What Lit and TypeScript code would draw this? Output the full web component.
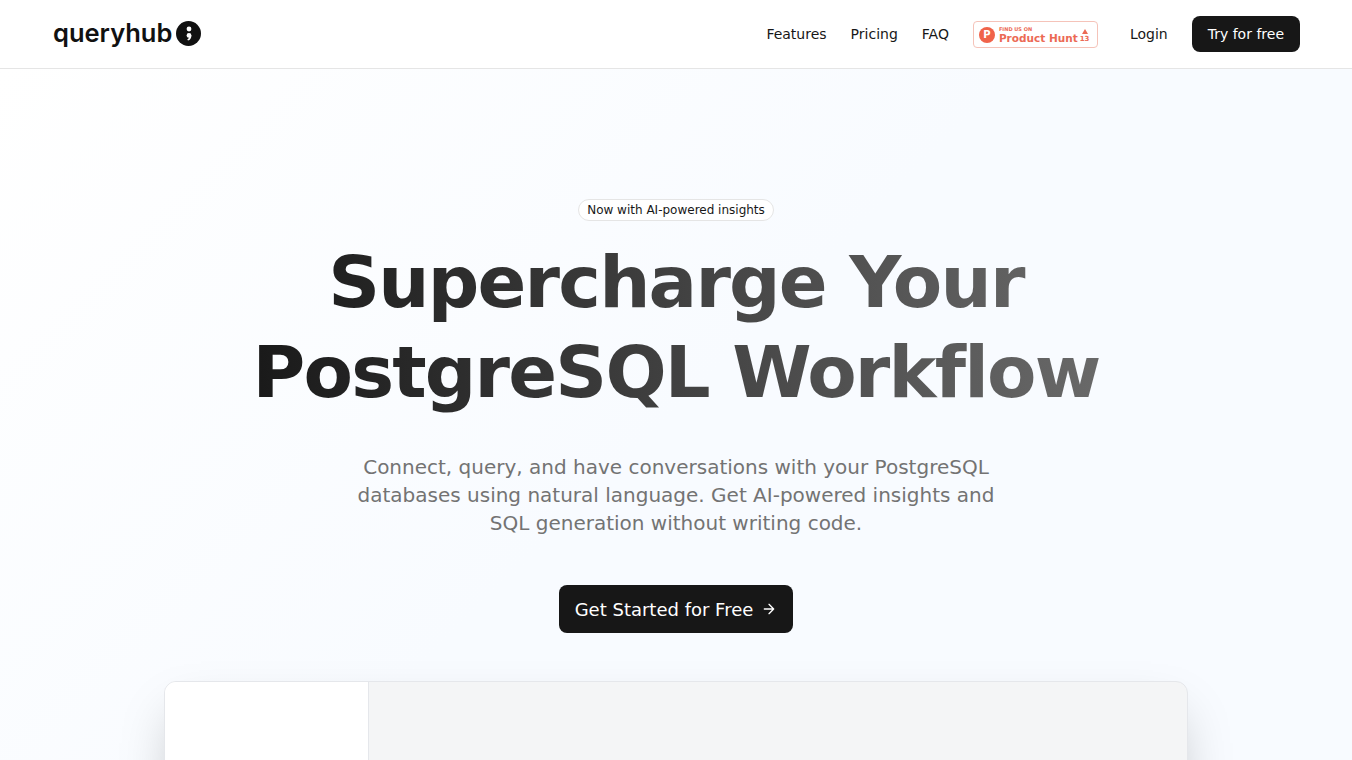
import { LitElement, css, html } from 'lit';
import { customElement } from 'lit/decorators.js';

@customElement('app-root')
export class AppRoot extends LitElement {
  static styles = css`
    :host {
      display: block;
      height: 760px;
      overflow: hidden;
      font-family: 'DejaVu Sans', sans-serif;
      color: #171717;
      background: #fff;
    }
    header {
      height: 69px;
      box-sizing: border-box;
      border-bottom: 1px solid #e5e5e5;
      padding: 0 52px 0 53px;
      display: flex;
      align-items: center;
      justify-content: space-between;
      background: #fff;
    }
    .logo {
      display: flex;
      align-items: center;
      gap: 4px;
      margin-top: -2px;
      font-family: Inter, sans-serif;
      font-weight: 600;
      font-size: 25.5px;
      color: #111;
    }
    .logo-name {
      margin-bottom: 2px;
    }
    .logo-mark {
      width: 25px;
      height: 25px;
      border-radius: 50%;
      background: #111;
      display: flex;
      align-items: center;
      justify-content: center;
    }
    nav {
      display: flex;
      align-items: center;
      gap: 24px;
      font-size: 14px;
    }
    .ph {
      width: 125px;
      height: 27px;
      box-sizing: border-box;
      border: 1px solid #f5c3b9;
      border-radius: 4px;
      display: flex;
      align-items: center;
      padding: 0 9px 0 5px;
      gap: 2px;
      margin-top: 1px;
      color: #ec6a55;
      background: #fff;
    }
    .ph-dot {
      width: 16px;
      height: 16px;
      border-radius: 50%;
      background: #f0634a;
      color: #fff;
      font-size: 10px;
      font-weight: 700;
      display: flex;
      align-items: center;
      justify-content: center;
      flex: none;
      margin-right: 2px;
    }
    .ph-text {
      display: flex;
      flex-direction: column;
      font-weight: 700;
      flex: 1;
      white-space: nowrap;
    }
    .ph-small {
      font-size: 5px;
      line-height: 6px;
    }
    .ph-big {
      font-size: 10.5px;
      line-height: 12px;
    }
    .ph-vote {
      display: flex;
      flex-direction: column;
      align-items: center;
      font-size: 7px;
      line-height: 8px;
      font-weight: 700;
      margin-top: 2px;
    }
    .ph-tri {
      width: 0;
      height: 0;
      border-left: 3px solid transparent;
      border-right: 3px solid transparent;
      border-bottom: 5px solid #ec6a55;
      margin-bottom: 1px;
    }
    .btn {
      background: #171717;
      color: #fff;
      border-radius: 8px;
      display: flex;
      align-items: center;
      flex: none;
    }
    .try {
      height: 36px;
      padding: 0 16px;
    }
    .login {
      margin-left: 8px;
    }
    .hero {
      height: 691px;
      box-sizing: border-box;
      padding-top: 130px;
      display: flex;
      flex-direction: column;
      align-items: center;
      background: linear-gradient(135deg, #ffffff 0%, #f8fbff 50%, #f8fbff 100%);
    }
    .pill {
      flex: none;
      height: 22px;
      box-sizing: border-box;
      border: 1px solid #e5e5e5;
      border-radius: 11px;
      padding: 0 8px;
      background: #fff;
      font-size: 12px;
      display: flex;
      align-items: center;
    }
    h1 {
      flex: none;
      margin: 16px 0 0;
      width: 896px;
      text-align: center;
      font-size: 72px;
      line-height: 90px;
      font-weight: 700;
      letter-spacing: -0.025em;
      color: transparent;
      background: linear-gradient(to right, #171717, #6b6b6b);
      -webkit-background-clip: text;
      background-clip: text;
    }
    p {
      flex: none;
      margin: 36px 0 0;
      width: 672px;
      text-align: center;
      font-size: 20px;
      line-height: 28px;
      color: #737373;
    }
    .cta {
      margin-top: 48px;
      height: 48px;
      padding: 0 16px;
      gap: 8px;
      font-size: 18px;
    }
    .preview-wrap {
      flex: none;
      margin-top: 48px;
      border-radius: 12px;
      box-shadow: 0 25px 50px -12px rgba(0, 0, 0, 0.25);
    }
    .preview {
      width: 1024px;
      height: 400px;
      box-sizing: border-box;
      border: 1px solid #e5e7eb;
      border-radius: 12px;
      overflow: hidden;
      display: flex;
      background: #f4f5f6;
    }
    .side {
      width: 204px;
      box-sizing: border-box;
      background: #fff;
      border-right: 1px solid #e5e7eb;
    }
  `;

  render() {
    return html`
      <header>
        <div class="logo">
          <span class="logo-name">queryhub</span>
          <span class="logo-mark">
            <svg width="8" height="15" viewBox="0 0 8 15" fill="#fff">
              <circle cx="4" cy="3" r="2.4" />
              <circle cx="4" cy="9.4" r="2.4" />
              <path d="M6.4 9.4c0 2.6-1.2 4.4-3.4 5.2l-.7-1.2c1-.5 1.6-1.3 1.8-2.2z" />
            </svg>
          </span>
        </div>
        <nav>
          <span>Features</span>
          <span>Pricing</span>
          <span>FAQ</span>
          <div class="ph">
            <span class="ph-dot">P</span>
            <div class="ph-text">
              <span class="ph-small">FIND US ON</span>
              <span class="ph-big">Product Hunt</span>
            </div>
            <div class="ph-vote"><span class="ph-tri"></span><span>13</span></div>
          </div>
          <span class="login">Login</span>
          <span class="btn try">Try for free</span>
        </nav>
      </header>
      <section class="hero">
        <div class="pill">Now with AI-powered insights</div>
        <h1>Supercharge Your PostgreSQL Workflow</h1>
        <p>
          Connect, query, and have conversations with your PostgreSQL databases using natural
          language. Get AI-powered insights and SQL generation without writing code.
        </p>
        <div class="btn cta">
          <span>Get Started for Free</span>
          <svg width="16" height="16" viewBox="0 0 24 24" fill="none" stroke="#fff" stroke-width="2" stroke-linecap="round" stroke-linejoin="round">
            <path d="M5 12h14M12 5l7 7-7 7" />
          </svg>
        </div>
        <div class="preview-wrap"><div class="preview"><div class="side"></div></div></div>
      </section>
    `;
  }
}
